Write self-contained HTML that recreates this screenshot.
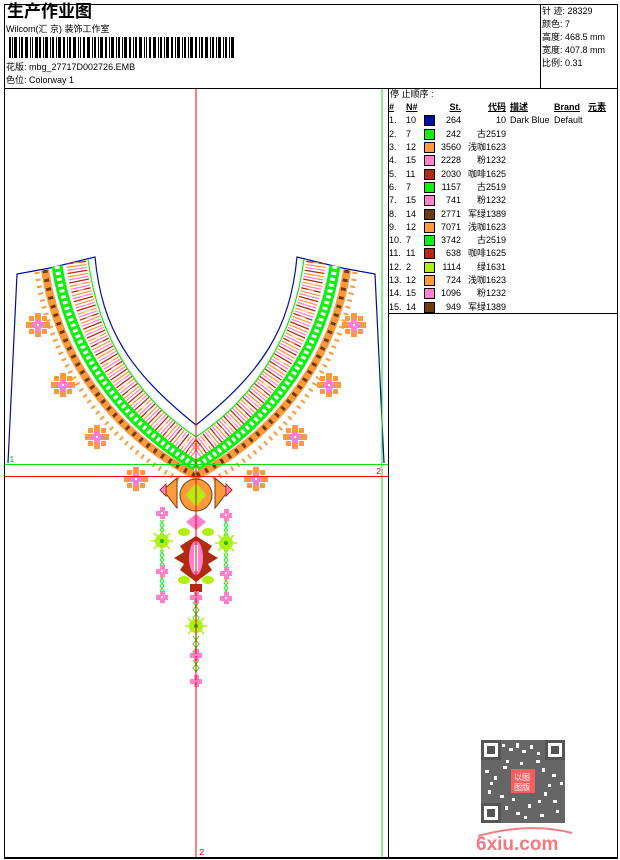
<!DOCTYPE html>
<html><head><meta charset="utf-8"><style>
html,body{margin:0;padding:0;background:#fff;}
body{width:620px;height:860px;position:relative;overflow:hidden;font-family:"Liberation Sans","Noto Sans CJK SC",sans-serif;font-size:9px;color:#000;}
.a{position:absolute;white-space:nowrap;line-height:11px;}
.ln{position:absolute;background:#000;}
.t td{padding:0;height:13.3px;line-height:13px;font-size:9px;white-space:nowrap;}
</style></head><body>
<div class="ln" style="left:4px;top:4px;width:614px;height:1px"></div>
<div class="ln" style="left:4px;top:4px;width:1px;height:855px"></div>
<div class="ln" style="left:617px;top:4px;width:1px;height:855px"></div>
<div class="ln" style="left:4px;top:857px;width:614px;height:2px"></div>
<div class="ln" style="left:4px;top:88px;width:614px;height:1px"></div>
<div class="ln" style="left:540px;top:4px;width:1px;height:85px"></div>
<div class="ln" style="left:388px;top:88px;width:1px;height:770px"></div>
<div class="ln" style="left:388px;top:313px;width:230px;height:1px"></div>

<div class="a" style="left:7px;top:3px;font-size:17px;line-height:18px;font-weight:bold">生产作业图</div>
<div class="a" style="left:6px;top:24px">Wilcom(汇 京) 装饰工作室</div>
<svg style="position:absolute;left:9px;top:37px" width="226" height="21">
<g fill="#000">
<rect x="0" width="2" height="21"/><rect x="3" width="1" height="21"/><rect x="5" width="3" height="21"/><rect x="10" width="1" height="21"/><rect x="12" width="2" height="21"/><rect x="16" width="3" height="21"/><rect x="21" width="1" height="21"/><rect x="23" width="1" height="21"/><rect x="26" width="3" height="21"/><rect x="30" width="2" height="21"/><rect x="34" width="1" height="21"/><rect x="36" width="3" height="21"/><rect x="41" width="1" height="21"/><rect x="43" width="2" height="21"/><rect x="47" width="1" height="21"/><rect x="49" width="3" height="21"/><rect x="54" width="2" height="21"/><rect x="58" width="1" height="21"/><rect x="60" width="2" height="21"/><rect x="64" width="3" height="21"/><rect x="69" width="1" height="21"/><rect x="71" width="1" height="21"/><rect x="74" width="2" height="21"/><rect x="78" width="3" height="21"/><rect x="83" width="1" height="21"/><rect x="85" width="2" height="21"/><rect x="89" width="1" height="21"/><rect x="91" width="3" height="21"/><rect x="96" width="2" height="21"/><rect x="100" width="1" height="21"/><rect x="102" width="3" height="21"/><rect x="107" width="1" height="21"/><rect x="109" width="2" height="21"/><rect x="113" width="1" height="21"/><rect x="115" width="3" height="21"/><rect x="120" width="2" height="21"/><rect x="124" width="1" height="21"/><rect x="126" width="2" height="21"/><rect x="130" width="3" height="21"/><rect x="135" width="1" height="21"/><rect x="137" width="1" height="21"/><rect x="140" width="2" height="21"/><rect x="144" width="3" height="21"/><rect x="149" width="1" height="21"/><rect x="151" width="2" height="21"/><rect x="155" width="1" height="21"/><rect x="157" width="3" height="21"/><rect x="162" width="2" height="21"/><rect x="166" width="1" height="21"/><rect x="168" width="3" height="21"/><rect x="173" width="1" height="21"/><rect x="175" width="2" height="21"/><rect x="179" width="1" height="21"/><rect x="181" width="3" height="21"/><rect x="186" width="2" height="21"/><rect x="190" width="1" height="21"/><rect x="192" width="2" height="21"/><rect x="196" width="3" height="21"/><rect x="201" width="1" height="21"/><rect x="203" width="2" height="21"/><rect x="207" width="1" height="21"/><rect x="209" width="3" height="21"/><rect x="214" width="1" height="21"/><rect x="216" width="2" height="21"/><rect x="220" width="1" height="21"/><rect x="222" width="3" height="21"/>
</g></svg>
<div class="a" style="left:6px;top:62px">花版: mbg_27717D002726.EMB</div>
<div class="a" style="left:6px;top:75px">色位: Colorway 1</div>

<div class="a" style="left:542px;top:6px">针 迹: 28329</div>
<div class="a" style="left:542px;top:19px">颜色: 7</div>
<div class="a" style="left:542px;top:32px">高度: 468.5 mm</div>
<div class="a" style="left:542px;top:45px">宽度: 407.8 mm</div>
<div class="a" style="left:542px;top:58px">比例: 0.31</div>

<div class="a" style="left:390px;top:89px">停 止顺序 :</div>
<table class="t" style="position:absolute;left:389px;top:101px;border-collapse:collapse">
<tr style="font-weight:bold;text-decoration:underline"><td style="width:17px">#</td><td style="width:18px">N#</td><td style="width:14px"></td><td style="width:23px;text-align:right">St.</td><td style="width:45px;text-align:right">代码</td><td style="width:44px;padding-left:4px">描述</td><td style="width:34px">Brand</td><td>元素</td></tr>
<tr><td>1.</td><td>10</td><td><i style="display:block;width:9px;height:9px;border:1px solid #000;background:#00109c"></i></td><td style="text-align:right">264</td><td style="text-align:right">10</td><td style="padding-left:4px">Dark Blue</td><td>Default</td><td></td></tr>
<tr><td>2.</td><td>7</td><td><i style="display:block;width:9px;height:9px;border:1px solid #000;background:#10f010"></i></td><td style="text-align:right">242</td><td style="text-align:right">古2519</td><td></td><td></td><td></td></tr>
<tr><td>3.</td><td>12</td><td><i style="display:block;width:9px;height:9px;border:1px solid #000;background:#ff9a3c"></i></td><td style="text-align:right">3560</td><td style="text-align:right">浅咖1623</td><td></td><td></td><td></td></tr>
<tr><td>4.</td><td>15</td><td><i style="display:block;width:9px;height:9px;border:1px solid #000;background:#ff80cc"></i></td><td style="text-align:right">2228</td><td style="text-align:right">粉1232</td><td></td><td></td><td></td></tr>
<tr><td>5.</td><td>11</td><td><i style="display:block;width:9px;height:9px;border:1px solid #000;background:#b02c10"></i></td><td style="text-align:right">2030</td><td style="text-align:right">咖啡1625</td><td></td><td></td><td></td></tr>
<tr><td>6.</td><td>7</td><td><i style="display:block;width:9px;height:9px;border:1px solid #000;background:#10f010"></i></td><td style="text-align:right">1157</td><td style="text-align:right">古2519</td><td></td><td></td><td></td></tr>
<tr><td>7.</td><td>15</td><td><i style="display:block;width:9px;height:9px;border:1px solid #000;background:#ff80cc"></i></td><td style="text-align:right">741</td><td style="text-align:right">粉1232</td><td></td><td></td><td></td></tr>
<tr><td>8.</td><td>14</td><td><i style="display:block;width:9px;height:9px;border:1px solid #000;background:#6c3c0c"></i></td><td style="text-align:right">2771</td><td style="text-align:right">军绿1389</td><td></td><td></td><td></td></tr>
<tr><td>9.</td><td>12</td><td><i style="display:block;width:9px;height:9px;border:1px solid #000;background:#ff9a3c"></i></td><td style="text-align:right">7071</td><td style="text-align:right">浅咖1623</td><td></td><td></td><td></td></tr>
<tr><td>10.</td><td>7</td><td><i style="display:block;width:9px;height:9px;border:1px solid #000;background:#10f010"></i></td><td style="text-align:right">3742</td><td style="text-align:right">古2519</td><td></td><td></td><td></td></tr>
<tr><td>11.</td><td>11</td><td><i style="display:block;width:9px;height:9px;border:1px solid #000;background:#b02c10"></i></td><td style="text-align:right">638</td><td style="text-align:right">咖啡1625</td><td></td><td></td><td></td></tr>
<tr><td>12.</td><td>2</td><td><i style="display:block;width:9px;height:9px;border:1px solid #000;background:#b0f010"></i></td><td style="text-align:right">1114</td><td style="text-align:right">绿1631</td><td></td><td></td><td></td></tr>
<tr><td>13.</td><td>12</td><td><i style="display:block;width:9px;height:9px;border:1px solid #000;background:#ff9a3c"></i></td><td style="text-align:right">724</td><td style="text-align:right">浅咖1623</td><td></td><td></td><td></td></tr>
<tr><td>14.</td><td>15</td><td><i style="display:block;width:9px;height:9px;border:1px solid #000;background:#ff80cc"></i></td><td style="text-align:right">1096</td><td style="text-align:right">粉1232</td><td></td><td></td><td></td></tr>
<tr><td>15.</td><td>14</td><td><i style="display:block;width:9px;height:9px;border:1px solid #000;background:#6c3c0c"></i></td><td style="text-align:right">949</td><td style="text-align:right">军绿1389</td><td></td><td></td><td></td></tr>
</table>

<svg style="position:absolute;left:0;top:0" width="620" height="860">
<defs>
<g id="fl"><g fill="#ff9a3c"><rect x="-3" y="-12" width="6" height="7"/><rect x="-3" y="5" width="6" height="7"/><rect x="-12" y="-3" width="7" height="6"/><rect x="5" y="-3" width="7" height="6"/><rect x="-9" y="-9" width="5" height="5"/><rect x="4" y="-9" width="5" height="5"/><rect x="-9" y="4" width="5" height="5"/><rect x="4" y="4" width="5" height="5"/></g><rect x="-6" y="-3" width="12" height="6" fill="#ff80cc"/><rect x="-3" y="-6" width="6" height="12" fill="#ff80cc"/><rect x="-1" y="-1" width="2" height="2" fill="#fff"/></g>
<g id="pc"><rect x="-6" y="-2" width="12" height="5" fill="#ff80cc"/><rect x="-2" y="-6" width="5" height="12" fill="#ff80cc"/><rect x="-1" y="-1" width="2" height="2" fill="#fff"/></g>
<g id="ls"><circle r="7" fill="#b0f010"/><g stroke="#b0f010" stroke-width="1.5"><line x1="-11" y1="0" x2="11" y2="0"/><line x1="0" y1="-11" x2="0" y2="11"/><line x1="-8" y1="-8" x2="8" y2="8"/><line x1="-8" y1="8" x2="8" y2="-8"/></g><circle r="2" fill="#10c010"/></g>
<g id="side">
<path d="M8,463 L17,274 L50,268 L95,257 C102,330 130,372 196,425" fill="none" stroke="#00109c" stroke-width="1.2"/>
<path d="M76,262 C86,340 128,402 196,452" fill="none" stroke="#b02c10" stroke-width="20" stroke-dasharray="1.3 8"/>
<path d="M76,262 C86,340 128,402 196,452" fill="none" stroke="#ff80cc" stroke-width="20" stroke-dasharray="1.3 8" stroke-dashoffset="3"/>
<path d="M76,262 C86,340 128,402 196,452" fill="none" stroke="#ff9a3c" stroke-width="20" stroke-dasharray="1.3 8" stroke-dashoffset="6"/>
<path d="M76,262 C86,340 128,402 196,452" fill="none" stroke="#fff" stroke-width="6" stroke-dasharray="2 5" opacity="0.5"/>
<path d="M88,259 C98,340 140,400 196,437" fill="none" stroke="#10f010" stroke-width="1.2"/>
<path d="M57,266 C70,350 120,420 196,466" fill="none" stroke="#10f010" stroke-width="11"/>
<path d="M57,266 C70,350 120,420 196,466" fill="none" stroke="#fff" stroke-width="5" stroke-dasharray="3 3"/>
<path d="M45,270 C58,355 110,432 196,476" fill="none" stroke="#ff9a3c" stroke-width="8"/>
<path d="M45,270 C58,355 110,432 196,476" fill="none" stroke="#6c3c0c" stroke-width="5" stroke-dasharray="3 6"/>
<path d="M37,272 C48,355 100,440 180,480" fill="none" stroke="#ff9a3c" stroke-width="5" stroke-dasharray="2 5"/>
<use href="#fl" x="38" y="325"/><use href="#fl" x="63" y="385"/><use href="#fl" x="97" y="437"/><use href="#fl" x="136" y="479"/>
</g>
</defs>
<use href="#side"/>
<use href="#side" transform="translate(392,0) scale(-1,1)"/>
<g stroke="#10f010" stroke-width="1" fill="none">
<path d="M160,520 l4,5 -4,5 4,5 -4,5 M164,520 l-4,5 4,5 -4,5 4,5 M160,550 l4,5 -4,5 4,5 -4,5 M164,550 l-4,5 4,5 -4,5 4,5 M160,576 l4,5 -4,5 4,5 M164,576 l-4,5 4,5 -4,5"/>
<path d="M224,520 l4,5 -4,5 4,5 -4,5 M228,520 l-4,5 4,5 -4,5 4,5 M224,550 l4,5 -4,5 4,5 -4,5 M228,550 l-4,5 4,5 -4,5 4,5 M224,578 l4,5 -4,5 4,5 M228,578 l-4,5 4,5 -4,5"/>
<path d="M193,602 l3,4 -3,4 3,4 -3,4 3,4 M199,602 l-3,4 3,4 -3,4 3,4 -3,4 M193,636 l3,4 -3,4 3,4 -3,4 3,4 M199,636 l-3,4 3,4 -3,4 3,4 -3,4 M193,660 l3,4 -3,4 3,4 M199,660 l-3,4 3,4 -3,4"/>
</g>
<path d="M163,490 l14,-12 0,30z M229,490 l-14,-12 0,30z" fill="#ff9a3c" stroke="#6c3c0c"/>
<path d="M160,490 l6,-6 0,12z M232,490 l-6,-6 0,12z" fill="#ff80cc" stroke="#b02c10"/>
<circle cx="196" cy="495" r="16" fill="#ff9a3c" stroke="#6c3c0c"/>
<path d="M196,483 l10,12 -10,12 -10,-12z" fill="#b0f010"/>
<path d="M196,514 l10,8 -10,8 -10,-8z" fill="#ff80cc"/>
<ellipse cx="184" cy="532" rx="6" ry="4" fill="#b0f010"/><ellipse cx="208" cy="532" rx="6" ry="4" fill="#b0f010"/>
<ellipse cx="184" cy="580" rx="6" ry="4" fill="#b0f010"/><ellipse cx="208" cy="580" rx="6" ry="4" fill="#b0f010"/>
<path d="M196,536 l16,10 -4,6 10,6 -10,6 4,6 -16,12 -16,-12 4,-6 -10,-6 10,-6 -4,-6z" fill="#b02c10"/>
<ellipse cx="196" cy="558" rx="7" ry="17" fill="#ff80cc"/>
<rect x="194" y="545" width="4" height="26" fill="#fff"/>
<rect x="190" y="584" width="12" height="8" fill="#b02c10"/>
<use href="#pc" x="196" y="597"/><use href="#pc" x="196" y="655"/><use href="#pc" x="196" y="681"/>
<use href="#ls" x="196" y="626"/><use href="#ls" x="162" y="541"/><use href="#ls" x="226" y="543"/>
<use href="#pc" x="162" y="513"/><use href="#pc" x="162" y="571"/><use href="#pc" x="162" y="597"/>
<use href="#pc" x="226" y="515"/><use href="#pc" x="226" y="573"/><use href="#pc" x="226" y="598"/>
<line x1="196" y1="89" x2="196" y2="857" stroke="#ff0000" stroke-width="1"/>
<line x1="382" y1="89" x2="382" y2="857" stroke="#10e010" stroke-width="1"/>
<line x1="5" y1="464.5" x2="388" y2="464.5" stroke="#10e010" stroke-width="1"/>
<line x1="5" y1="476.5" x2="388" y2="476.5" stroke="#ff0000" stroke-width="1"/>
<text x="9" y="462" font-family="Liberation Mono,monospace" font-size="9" fill="#10c010">1</text>
<text x="376" y="474" font-family="Liberation Mono,monospace" font-size="9" fill="#ff0000">2</text>
<text x="199" y="855" font-family="Liberation Mono,monospace" font-size="9" fill="#ff0000">2</text>
<g fill="#555">
<rect x="481" y="740" width="84" height="83" fill="#666"/>
<g fill="#fff"><rect x="502" y="744" width="3" height="3"/><rect x="509" y="748" width="4" height="3"/><rect x="516" y="743" width="3" height="5"/><rect x="522" y="750" width="4" height="3"/><rect x="530" y="745" width="3" height="4"/><rect x="537" y="752" width="3" height="3"/><rect x="485" y="770" width="4" height="3"/><rect x="494" y="776" width="3" height="4"/><rect x="503" y="766" width="4" height="3"/><rect x="542" y="768" width="3" height="4"/><rect x="552" y="774" width="4" height="3"/><rect x="560" y="782" width="3" height="3"/><rect x="488" y="790" width="3" height="4"/><rect x="500" y="795" width="4" height="3"/><rect x="544" y="792" width="3" height="4"/><rect x="553" y="800" width="4" height="3"/><rect x="505" y="806" width="3" height="4"/><rect x="516" y="812" width="4" height="3"/><rect x="528" y="804" width="3" height="4"/><rect x="540" y="814" width="4" height="3"/><rect x="556" y="810" width="3" height="3"/><rect x="506" y="760" width="3" height="3"/><rect x="520" y="762" width="3" height="3"/><rect x="536" y="760" width="4" height="3"/><rect x="490" y="782" width="3" height="3"/><rect x="512" y="798" width="3" height="3"/><rect x="538" y="800" width="3" height="3"/><rect x="548" y="784" width="3" height="3"/><rect x="524" y="816" width="3" height="3"/></g>
<rect x="481" y="740" width="20" height="20"/><rect x="484" y="743" width="14" height="14" fill="#fff"/><rect x="487" y="746" width="8" height="8"/>
<rect x="545" y="740" width="20" height="20"/><rect x="548" y="743" width="14" height="14" fill="#fff"/><rect x="551" y="746" width="8" height="8"/>
<rect x="481" y="803" width="20" height="20"/><rect x="484" y="806" width="14" height="14" fill="#fff"/><rect x="487" y="809" width="8" height="8"/>
</g>
<rect x="511" y="769" width="24" height="24" fill="#f06060"/>
<text x="514" y="780" font-size="8" fill="#fff" font-family="Noto Sans CJK SC,sans-serif">以图</text>
<text x="514" y="790" font-size="8" fill="#fff" font-family="Noto Sans CJK SC,sans-serif">图版</text>
<path d="M478,836 Q530,822 572,833" fill="none" stroke="#f08080" stroke-width="2"/>
<text x="476" y="850" font-family="Liberation Sans,sans-serif" font-weight="bold" font-size="19" fill="#f07a80">6xiu.com</text>
</svg>
</body></html>
